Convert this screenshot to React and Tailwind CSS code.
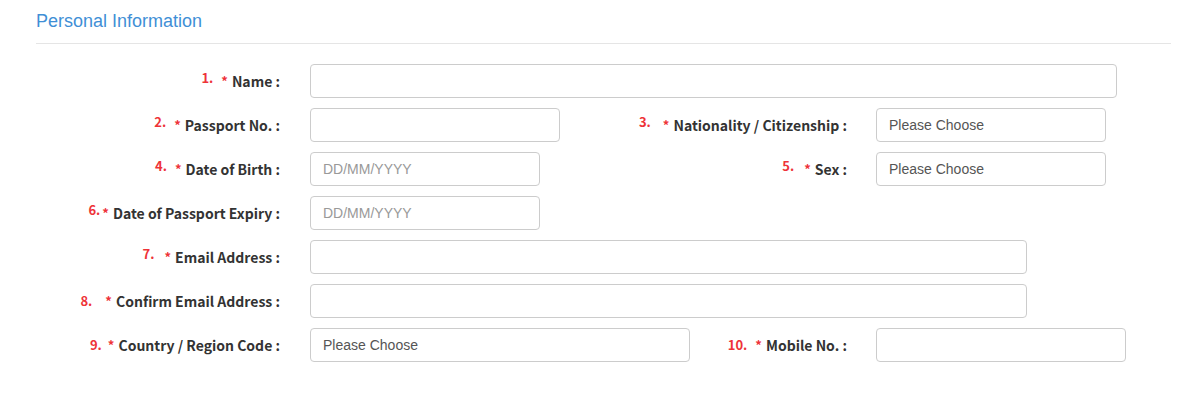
import React from 'react'

const labelFont = { fontFamily: '"Noto Sans CJK KR", "Noto Sans", sans-serif' }

// n: number, gap: space between number and star, up: raise the number a bit
const Label = ({ n, gap, up = true, text }) => (
    <div className="flex items-center justify-end whitespace-nowrap text-[14px] font-bold text-[#333]" style={labelFont}>
        <span className={`text-[13px] text-[#ee3338] ${up ? 'relative -top-[3px]' : ''} ${gap}`}>{n}</span>
        <span className="text-[13px] text-[#ee3338] mr-[4px]">*</span>
        <span>{text}</span>
    </div>
)

const Field = ({ width, value, placeholder }) => (
    <div
        className={`h-[34px] ${width} shrink-0 border border-[#cccccc] rounded-[4px] bg-white flex items-center px-[12px] text-[14px]`}
        style={{ fontFamily: '"Liberation Sans", Arial, sans-serif' }}
    >
        {value && <span className="text-[#555]">{value}</span>}
        {placeholder && <span className="text-[#999]">{placeholder}</span>}
    </div>
)

const Row = ({ label, field, right }) => (
    <div className="flex items-center h-[34px]">
        <div className="w-[244px] shrink-0">{label}</div>
        <div className="ml-[30px] w-[390px] shrink-0 flex">{field}</div>
        {right && (
            <>
                <div className="w-[147px] shrink-0 flex justify-end">{right.label}</div>
                <div className="ml-[29px]">{right.field}</div>
            </>
        )}
    </div>
)

export default function App() {
    return (
        <div className="min-h-screen bg-white">
            <div className="ml-[36px] w-[1135px]">
                {/* Section header */}
                <div className="pt-[11px] pb-[12px] border-b border-[#e5e5e5]">
                    <h2 className="text-[18px] leading-[20px] text-[#3f8fd6]" style={{ fontFamily: '"Liberation Sans", Arial, sans-serif' }}>
                        Personal Information
                    </h2>
                </div>

                {/* Form rows */}
                <div className="mt-[20px] flex flex-col gap-[10px]">
                    <Row
                        label={<Label n="1." gap="mr-[8px]" text="Name :" />}
                        field={<Field width="w-[807px]" />}
                    />
                    <Row
                        label={<Label n="2." gap="mr-[8px]" text="Passport No. :" />}
                        field={<Field width="w-[250px]" />}
                        right={{
                            label: <Label n="3." gap="mr-[12px]" text="Nationality / Citizenship :" />,
                            field: <Field width="w-[230px]" value="Please Choose" />,
                        }}
                    />
                    <Row
                        label={<Label n="4." gap="mr-[8px]" text="Date of Birth :" />}
                        field={<Field width="w-[230px]" placeholder="DD/MM/YYYY" />}
                        right={{
                            label: <Label n="5." gap="mr-[10px]" text="Sex :" />,
                            field: <Field width="w-[230px]" value="Please Choose" />,
                        }}
                    />
                    <Row
                        label={<Label n="6." gap="mr-[2px]" text="Date of Passport Expiry :" />}
                        field={<Field width="w-[230px]" placeholder="DD/MM/YYYY" />}
                    />
                    <Row
                        label={<Label n="7." gap="mr-[10px]" text="Email Address :" />}
                        field={<Field width="w-[717px]" />}
                    />
                    <Row
                        label={<Label n="8." gap="mr-[13px]" up={false} text="Confirm Email Address :" />}
                        field={<Field width="w-[717px]" />}
                    />
                    <Row
                        label={<Label n="9." gap="mr-[6px]" up={false} text="Country / Region Code :" />}
                        field={<Field width="w-[380px]" value="Please Choose" />}
                        right={{
                            label: <Label n="10." gap="mr-[8px]" up={false} text="Mobile No. :" />,
                            field: <Field width="w-[250px]" />,
                        }}
                    />
                </div>
            </div>
        </div>
    )
}
